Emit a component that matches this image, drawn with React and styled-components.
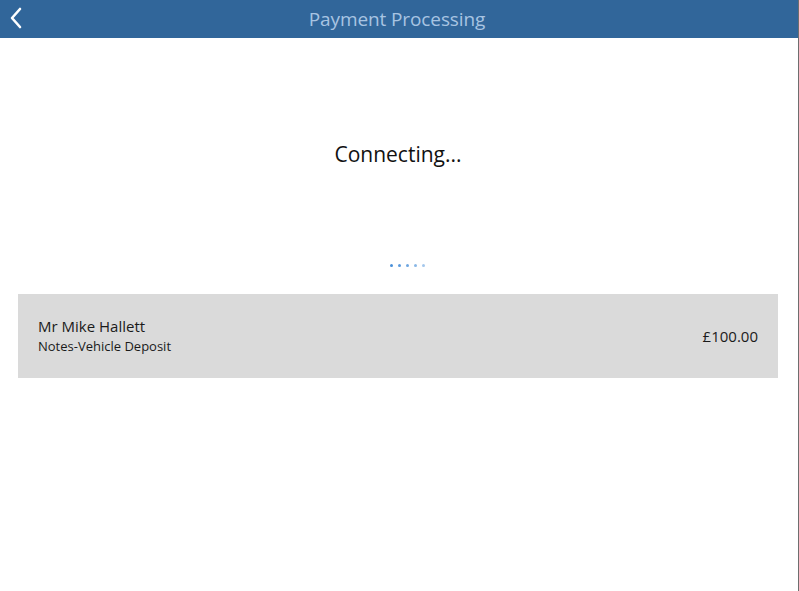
import styled, { createGlobalStyle } from "styled-components";

const GlobalStyle = createGlobalStyle`
  html, body {
    margin: 0;
    padding: 0;
    background: #ffffff;
  }
  body {
    font-family: "Open Sans", "Noto Sans", sans-serif;
    color: #1a1a1a;
  }
`;

const dots = [1, 0.9, 0.8, 0.65, 0.5];

const App = () => {
  return (
    <>
      <GlobalStyle />
      <Screen>
        <Header>
          <BackButton aria-label="Back">
            <svg width="14" height="22" viewBox="0 0 14 22">
              <path
                d="M11 2 L3 11 L11 20"
                fill="none"
                stroke="#ffffff"
                strokeWidth="2.6"
                strokeLinecap="round"
                strokeLinejoin="round"
              />
            </svg>
          </BackButton>
          <Title>Payment Processing</Title>
        </Header>
        <Body>
          <Status>Connecting...</Status>
          <Dots>
            {dots.map((o, i) => (
              <Dot key={i} style={{ opacity: o }} />
            ))}
          </Dots>
          <PaymentCard>
            <Details>
              <Name>Mr Mike Hallett</Name>
              <Notes>Notes-Vehicle Deposit</Notes>
            </Details>
            <Amount>£100.00</Amount>
          </PaymentCard>
        </Body>
      </Screen>
    </>
  );
};

const Screen = styled.div`
  width: 798px;
  height: 591px;
  border-right: 1px solid #6e6e6e;
  display: flex;
  flex-direction: column;
  background: #ffffff;
`;

const Header = styled.header`
  height: 38px;
  background: #31669a;
  display: flex;
  align-items: center;
  justify-content: center;
  position: relative;
`;

const BackButton = styled.button`
  position: absolute;
  left: 9px;
  top: 7px;
  background: none;
  border: none;
  padding: 0;
  display: flex;
  cursor: pointer;
`;

const Title = styled.h1`
  margin: 0;
  font-size: 19px;
  font-weight: 400;
  color: #a8c4e2;
  letter-spacing: -0.1px;
  transform: translateX(-2px);
`;

const Body = styled.main`
  flex: 1;
  display: flex;
  flex-direction: column;
  padding: 0 20px 0 18px;
`;

const Status = styled.div`
  margin-top: 101px;
  text-align: center;
  font-size: 21px;
  line-height: 30px;
  color: #111111;
`;

const Dots = styled.div`
  margin-top: 95px;
  display: flex;
  justify-content: center;
  gap: 5px;
  padding-left: 18px;
`;

const Dot = styled.span`
  width: 3px;
  height: 3px;
  border-radius: 50%;
  background: #4a90d9;
`;

const PaymentCard = styled.section`
  margin-top: 27px;
  height: 84px;
  background: #dadada;
  display: flex;
  align-items: center;
  justify-content: space-between;
  padding: 0 20px;
`;

const Details = styled.div`
  display: flex;
  flex-direction: column;
`;

const Name = styled.div`
  font-size: 15px;
  line-height: 21px;
  color: #1a1a1a;
`;

const Notes = styled.div`
  font-size: 13px;
  line-height: 19px;
  color: #1a1a1a;
`;

const Amount = styled.div`
  font-size: 15px;
  color: #1a1a1a;
`;

export default App;
